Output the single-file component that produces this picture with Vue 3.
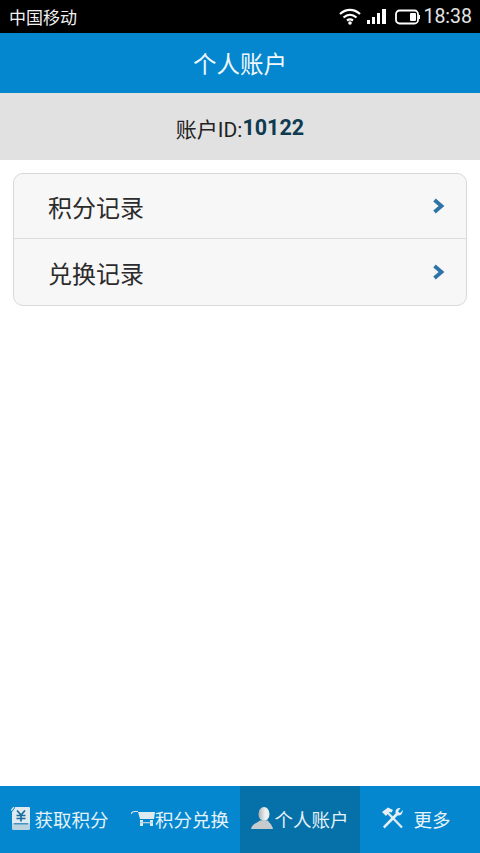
<script setup>
const rows = ['积分记录', '兑换记录']
const tabs = [
  { label: '获取积分', icon: 'yen' },
  { label: '积分兑换', icon: 'cart' },
  { label: '个人账户', icon: 'user', active: true },
  { label: '更多', icon: 'tools' }
]
</script>

<template>
  <div class="page">
    <div class="status">
      <span class="carrier">中国移动</span>
      <div class="status-right">
        <svg class="wifi" width="22" height="17" viewBox="0 0 22 17">
          <path d="M1 6 C7 0.500 15 0.500 21 6 M4.500 9.500 C8.500 6 13.500 6 17.500 9.500 M8 12.500 C10 11 12 11 14 12.500" fill="none" stroke="#fff" stroke-width="2.200" />
          <circle cx="11" cy="15" r="1.800" fill="#fff" />
        </svg>
        <svg class="signal" width="20" height="16" viewBox="0 0 20 16">
          <rect x="0" y="11" width="3" height="4" fill="#fff" />
          <rect x="5" y="8" width="3" height="7" fill="#fff" />
          <rect x="10" y="4" width="3" height="11" fill="#fff" />
          <rect x="15" y="0" width="4" height="15" fill="#fff" />
        </svg>
        <svg class="battery" width="25" height="16" viewBox="0 0 25 16">
          <rect x="1" y="1.500" width="22" height="13" rx="3.500" fill="none" stroke="#fff" stroke-width="1.800" />
          <rect x="15" y="4" width="6" height="8" rx="1" fill="#fff" />
          <rect x="23.500" y="6" width="1.500" height="4" fill="#fff" />
        </svg>
        <span class="time">18:38</span>
      </div>
    </div>

    <header class="title">个人账户</header>

    <div class="account">账户ID:<b>10122</b></div>

    <ul class="list">
      <li v-for="row in rows" :key="row" class="row">
        <span>{{ row }}</span>
        <svg width="13" height="16" viewBox="0 0 13 16">
          <path d="M2.500 2 L9.500 8 L2.500 14" fill="none" stroke="#2f74a6" stroke-width="3.800" />
        </svg>
      </li>
    </ul>

    <nav class="tabs">
      <div v-for="tab in tabs" :key="tab.label" class="tab" :class="[tab.icon, { active: tab.active }]">
        <svg v-if="tab.icon === 'yen'" width="19" height="23" viewBox="0 0 19 23">
          <path d="M4 1 L4 0 L18 0 Q19 0 19 1 V21 Q19 23 17 23 H3 Q1 23 1 21 V5 Z" fill="#dfe9ee" />
          <path d="M1 16 H19 V21 Q19 23 17 23 H3 Q1 23 1 21 Z" fill="#b9d2df" />
          <path d="M0 3.500 L3 0" stroke="#dfe9ee" stroke-width="1.200" fill="none" />
          <rect x="3" y="16" width="14" height="1.500" fill="#3f94c2" />
          <path d="M6 3.500 L10 8 L14 3.500 M5.500 8.500 H14.500 M5.500 11.500 H14.500 M10 8 V14.500" fill="none" stroke="#176c9c" stroke-width="1.700" />
        </svg>
        <svg v-else-if="tab.icon === 'cart'" width="24" height="16" viewBox="0 0 24 16">
          <path d="M0 3 Q1 0.500 4 0.500 H7" fill="none" stroke="#d3e4ed" stroke-width="1.100" />
          <path d="M7 1 H24 L23 8 H9 Z" fill="#dfeaf0" />
          <rect x="9" y="9" width="3" height="6" fill="#dfeaf0" />
          <rect x="19" y="9" width="3" height="6" fill="#dfeaf0" />
          <rect x="9" y="11" width="13" height="1.300" fill="#b5d2e0" />
        </svg>
        <svg v-else-if="tab.icon === 'user'" width="22" height="23" viewBox="0 0 22 23">
          <defs>
            <linearGradient id="head" x1="0" y1="0" x2="1" y2="0">
              <stop offset="0" stop-color="#aab2b5" />
              <stop offset="0.600" stop-color="#eef0f0" />
            </linearGradient>
          </defs>
          <ellipse cx="13" cy="7" rx="5.500" ry="7" fill="url(#head)" />
          <path d="M0 22 C1 17 6 16 9 13.500 H17 C18 16 21 17 22 22 Z" fill="#c6cbcd" />
        </svg>
        <svg v-else width="23" height="23" viewBox="0 0 23 23">
          <path d="M7 6 L21 20.500" stroke="#dcebf1" stroke-width="2.400" fill="none" />
          <path d="M1 5 L7 0.500 L12 3 L10.500 5.500 L8.500 5 L5 9 Z" fill="#e6f0f4" />
          <path d="M22 3 L19 6 L17 4.500 L19.500 1 Q15 0.500 14.500 4.500 L14.500 6.500 L2 19.500 L3.500 21.500 L16.500 8.500 Q21.500 9 22 3 Z" fill="#e6f0f4" />
        </svg>
        <span>{{ tab.label }}</span>
      </div>
    </nav>
  </div>
</template>

<style scoped>
.page {
  width: 480px;
  height: 853px;
  display: flex;
  flex-direction: column;
  background: #fff;
  overflow: hidden;
  font-family: "Noto Sans CJK SC", Roboto, sans-serif;
}
.status {
  height: 33px;
  background: #000;
  color: #f2f2f2;
  display: flex;
  align-items: center;
  justify-content: space-between;
  padding: 0 8px 0 9px;
  flex: none;
}
.carrier {
  font-size: 17px;
}
.status-right {
  display: flex;
  align-items: center;
}
.wifi {
  margin-right: 6px;
}
.signal {
  margin-right: 8px;
}
.battery {
  margin-right: 3px;
}
.time {
  font-family: Roboto, sans-serif;
  font-size: 19.5px;
  color: #e4e4e4;
}
.title {
  height: 60px;
  flex: none;
  background: #0487cf;
  color: #f2f8fc;
  font-size: 23.5px;
  display: flex;
  align-items: center;
  justify-content: center;
}
.account {
  height: 67px;
  flex: none;
  box-sizing: border-box;
  padding-top: 2px;
  background: #e1e1e1;
  color: #222;
  font-size: 21px;
  font-family: Roboto, "Noto Sans CJK SC", sans-serif;
  display: flex;
  align-items: center;
  justify-content: center;
}
.account b {
  color: #0f3a50;
  font-weight: 700;
  font-size: 21.5px;
}
.list {
  list-style: none;
  margin: 13px 13px 0;
  padding: 0;
  border: 1px solid #d8d8d8;
  border-radius: 10px;
  background: #f7f7f7;
  flex: none;
}
.row {
  height: 64px;
  box-sizing: border-box;
  padding: 0 21px 0 34px;
  display: flex;
  align-items: center;
  justify-content: space-between;
  font-size: 24px;
  color: #2b2b2b;
}
.row + .row {
  height: 67px;
  border-top: 1px solid #dcdcdc;
}
.tabs {
  margin-top: auto;
  height: 67px;
  flex: none;
  display: flex;
  background: #0487cf;
}
.tab {
  flex: 0 0 120px;
  height: 67px;
  display: flex;
  align-items: center;
  justify-content: center;
  gap: 2px;
  padding-bottom: 2px;
  box-sizing: border-box;
  color: #e6f2f8;
  font-size: 18.5px;
}
.tab.yen {
  gap: 4px;
}
.tab.cart {
  gap: 0;
}
.tab.active {
  background: #0571a8;
  gap: 1px;
}
.tab.tools {
  gap: 9px;
  padding-right: 8px;
}
</style>
